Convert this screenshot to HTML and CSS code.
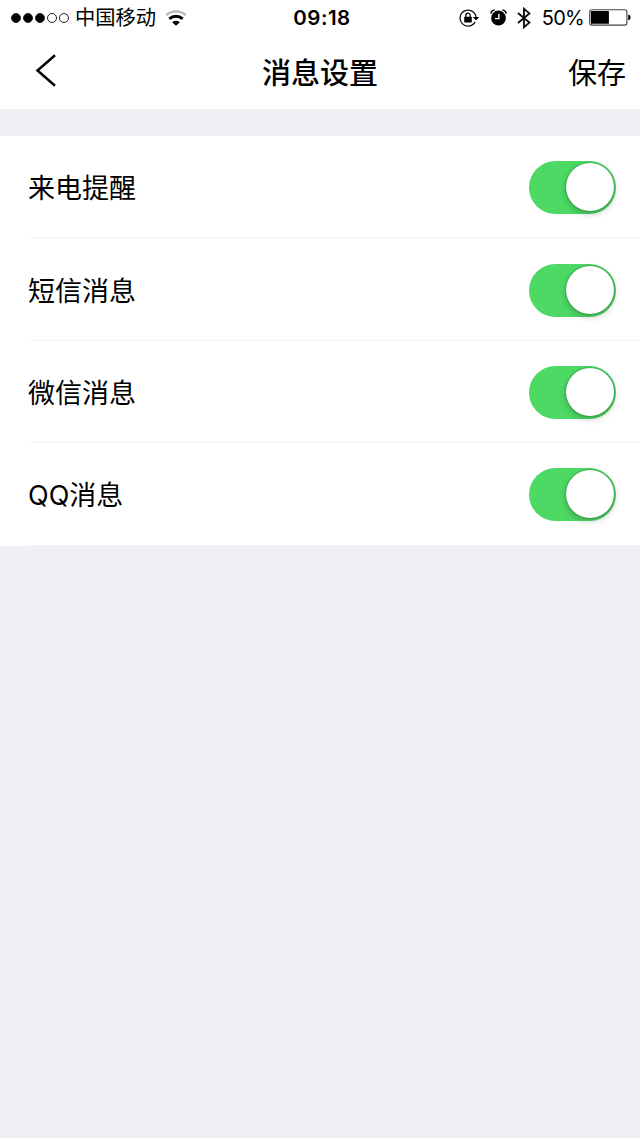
FILE: index.html
```html
<!DOCTYPE html>
<html lang="zh-CN">
<head>
  <meta charset="UTF-8">
  <meta name="viewport" content="width=device-width, initial-scale=1.0">
  <title>消息设置</title>
  <link rel="stylesheet" href="styles.css">
</head>
<body>

<header>
  <!-- 状态栏 -->
  <div class="status-bar">
    <div class="status-left">
      <div class="signal">
        <i class="dot on"></i><i class="dot on"></i><i class="dot on"></i><i class="dot"></i><i class="dot"></i>
      </div>
      <span class="carrier">中国移动</span>
      <svg class="wifi" width="22" height="16" viewBox="0 0 22 16" fill="none">
        <path d="M1.4 5a14.5 14.5 0 0 1 19.2 0" stroke="#b4b4b4" stroke-width="2.4"/>
        <path d="M4.3 8.8a10 10 0 0 1 13.4 0" stroke="#000" stroke-width="2.9"/>
        <path d="M7.2 12.2a5.6 5.6 0 0 1 7.6 0L11 15.8z" fill="#000"/>
      </svg>
    </div>
    <span class="time">09:18</span>
    <div class="status-right">
      <svg class="lock" width="21" height="18" viewBox="0 0 21 18" fill="none">
        <path d="M16.1 12.9A8 8 0 1 1 17 8.2" stroke="#111" stroke-width="1.3"/>
        <path d="M13.8 7.9h6.4L17 11.6z" fill="#000"/>
        <rect x="5.2" y="7.8" width="7.6" height="5.6" rx=".6" fill="#000"/>
        <path d="M6.8 8.4V6.4a2.2 2.2 0 0 1 4.4 0v2" stroke="#000" stroke-width="1.3"/>
      </svg>
      <svg class="alarm" width="17" height="17" viewBox="0 0 17 17" fill="none">
        <circle cx="8.5" cy="9" r="7.4" fill="#000"/>
        <path d="M.8 4.6A4.6 4.6 0 0 1 4.6.9M12.4.9a4.6 4.6 0 0 1 3.8 3.7" stroke="#000" stroke-width="1.4"/>
        <path d="M8.9 4.8v4.8H5" stroke="#fff" stroke-width="1.4"/>
      </svg>
      <svg class="bluetooth" width="14" height="22" viewBox="0 0 14 22" fill="none">
        <path d="M1 6l11.4 9.6L7 20.2V1.8l5.4 4.6L1 16" stroke="#111" stroke-width="1.9"/>
      </svg>
      <span class="percent">50%</span>
      <svg class="battery" width="42" height="17" viewBox="0 0 42 17" fill="none">
        <rect x=".7" y=".7" width="37.2" height="15.4" rx="2" stroke="#444" stroke-width="1.1"/>
        <rect x="1.9" y="2" width="18" height="12.8" rx=".6" fill="#000"/>
        <path d="M39.2 5.6c1.6.4 2.3 1.4 2.3 2.8s-.7 2.4-2.3 2.8z" fill="#000"/>
      </svg>
    </div>
  </div>

  <!-- 导航栏 -->
  <div class="nav-bar">
    <a class="back" aria-label="返回">
      <svg width="22" height="34" viewBox="0 0 22 34" fill="none">
        <path d="M20 1.2L2.5 16.5 20 31.8" stroke="#000" stroke-width="2.5"/>
      </svg>
    </a>
    <h1>消息设置</h1>
    <a class="save">保存</a>
  </div>
</header>

<!-- 设置列表 -->
<ul class="settings">
  <li>
    <span>来电提醒</span>
    <label class="switch"><input type="checkbox" checked><i class="knob"></i></label>
  </li>
  <li>
    <span>短信消息</span>
    <label class="switch"><input type="checkbox" checked><i class="knob"></i></label>
  </li>
  <li>
    <span>微信消息</span>
    <label class="switch"><input type="checkbox" checked><i class="knob"></i></label>
  </li>
  <li>
    <span>QQ消息</span>
    <label class="switch"><input type="checkbox" checked><i class="knob"></i></label>
  </li>
</ul>

</body>
</html>
```

FILE: styles.css
```css
* {
  box-sizing: border-box;
}
body {
  margin: 0;
  background-color: #efeff4;
  color: #000;
  font-family: Inter, "Noto Sans CJK SC", sans-serif;
}
header {
  height: 109px;
  background: #fff;
}
.status-bar {
  display: grid;
  grid-template-columns: 1fr auto 1fr;
  align-items: center;
  height: 35px;
  padding: 0 9px 0 11px;
}
.status-left,
.status-right,
.signal {
  display: flex;
  align-items: center;
}
.status-right {
  justify-content: flex-end;
}
.signal {
  gap: 2px;
}
.dot {
  width: 10px;
  height: 10px;
  border: 1px solid #222;
  border-radius: 50%;
}
.dot.on {
  background: #000;
}
.carrier {
  margin-left: 6px;
  font-size: 20.3px;
  line-height: 35px;
}
.wifi {
  margin-left: 9px;
}
.time {
  padding-left: 2px;
  font-size: 20.5px;
  font-weight: 600;
  letter-spacing: 0.5px;
}
.alarm {
  margin-left: 10px;
}
.bluetooth {
  margin-left: 10px;
}
.percent {
  margin-left: 11px;
  font-size: 20px;
  letter-spacing: -0.7px;
}
.battery {
  margin-left: 5px;
}
.nav-bar {
  display: grid;
  grid-template-columns: 1fr auto 1fr;
  align-items: center;
  height: 71px;
  padding: 0 14px;
}
.back {
  padding-left: 21px;
}
.back svg {
  display: block;
}
.nav-bar h1 {
  margin: 0;
  font-size: 29px;
  font-weight: 500;
}
.save {
  font-size: 29px;
  text-align: right;
}
.settings {
  margin: 27px 0 0;
  padding: 0 0 0 28px;
  list-style: none;
  background: #fff;
}
.settings li {
  display: flex;
  justify-content: space-between;
  align-items: center;
  height: 102.4px;
  padding: 2px 24px 0 0;
  border-bottom: 1px solid #f3f3f5;
  font-size: 27px;
}
.settings span {
  margin-top: -2px;
}
.switch {
  display: flex;
  justify-content: flex-end;
  width: 87px;
  height: 53px;
  padding: 2px;
  border-radius: 27px;
  background: #4cd964;
}
.switch input {
  display: none;
}
.knob {
  width: 48px;
  height: 48px;
  border-radius: 50%;
  background: #fff;
  box-shadow: 0 3px 7px rgba(0, 0, 0, 0.22), 0 0 2px rgba(0, 0, 0, 0.45);
}
```
